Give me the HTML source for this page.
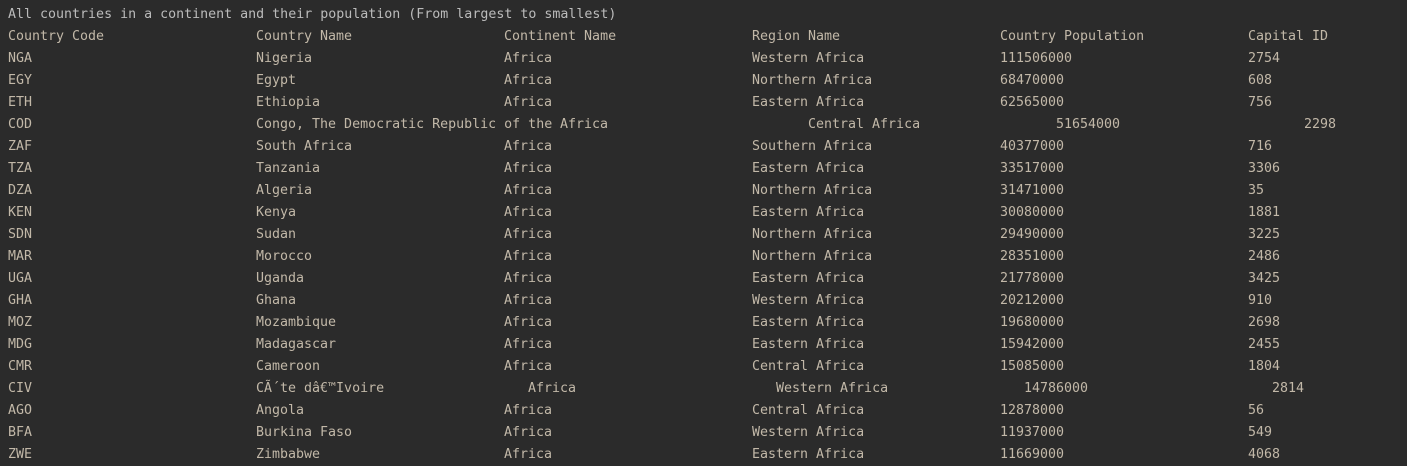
<!DOCTYPE html>
<html><head><meta charset="utf-8">
<style>
html,body{margin:0;padding:0;background:#2b2b2b;width:1407px;height:465px;overflow:hidden}
body{font-family:"DejaVu Sans Mono","Liberation Mono",monospace;font-size:13.3px;color:#c2b8a8}
.r{position:absolute;left:0;height:22px;line-height:22px;width:1407px;white-space:pre}
.r span{position:absolute;top:0}
.t{color:#bbbbbb}
.a{left:8px}.b{left:256px}.c{left:504px}.d{left:752px}.e{left:1000px}.f{left:1248px}
.s7 .c{left:560px}.s7 .d{left:808px}.s7 .e{left:1056px}.s7 .f{left:1304px}
.s3 .c{left:528px}.s3 .d{left:776px}.s3 .e{left:1024px}.s3 .f{left:1272px}
</style></head><body>
<div class="r t" style="top:4px"><span class="a">All countries in a continent and their population (From largest to smallest)</span></div>
<div class="r" style="top:26px"><span class="a">Country Code</span><span class="b">Country Name</span><span class="c">Continent Name</span><span class="d">Region Name</span><span class="e">Country Population</span><span class="f">Capital ID</span></div>
<div class="r" style="top:48px"><span class="a">NGA</span><span class="b">Nigeria</span><span class="c">Africa</span><span class="d">Western Africa</span><span class="e">111506000</span><span class="f">2754</span></div>
<div class="r" style="top:70px"><span class="a">EGY</span><span class="b">Egypt</span><span class="c">Africa</span><span class="d">Northern Africa</span><span class="e">68470000</span><span class="f">608</span></div>
<div class="r" style="top:92px"><span class="a">ETH</span><span class="b">Ethiopia</span><span class="c">Africa</span><span class="d">Eastern Africa</span><span class="e">62565000</span><span class="f">756</span></div>
<div class="r s7" style="top:114px"><span class="a">COD</span><span class="b">Congo, The Democratic Republic of the</span><span class="c">Africa</span><span class="d">Central Africa</span><span class="e">51654000</span><span class="f">2298</span></div>
<div class="r" style="top:136px"><span class="a">ZAF</span><span class="b">South Africa</span><span class="c">Africa</span><span class="d">Southern Africa</span><span class="e">40377000</span><span class="f">716</span></div>
<div class="r" style="top:158px"><span class="a">TZA</span><span class="b">Tanzania</span><span class="c">Africa</span><span class="d">Eastern Africa</span><span class="e">33517000</span><span class="f">3306</span></div>
<div class="r" style="top:180px"><span class="a">DZA</span><span class="b">Algeria</span><span class="c">Africa</span><span class="d">Northern Africa</span><span class="e">31471000</span><span class="f">35</span></div>
<div class="r" style="top:202px"><span class="a">KEN</span><span class="b">Kenya</span><span class="c">Africa</span><span class="d">Eastern Africa</span><span class="e">30080000</span><span class="f">1881</span></div>
<div class="r" style="top:224px"><span class="a">SDN</span><span class="b">Sudan</span><span class="c">Africa</span><span class="d">Northern Africa</span><span class="e">29490000</span><span class="f">3225</span></div>
<div class="r" style="top:246px"><span class="a">MAR</span><span class="b">Morocco</span><span class="c">Africa</span><span class="d">Northern Africa</span><span class="e">28351000</span><span class="f">2486</span></div>
<div class="r" style="top:268px"><span class="a">UGA</span><span class="b">Uganda</span><span class="c">Africa</span><span class="d">Eastern Africa</span><span class="e">21778000</span><span class="f">3425</span></div>
<div class="r" style="top:290px"><span class="a">GHA</span><span class="b">Ghana</span><span class="c">Africa</span><span class="d">Western Africa</span><span class="e">20212000</span><span class="f">910</span></div>
<div class="r" style="top:312px"><span class="a">MOZ</span><span class="b">Mozambique</span><span class="c">Africa</span><span class="d">Eastern Africa</span><span class="e">19680000</span><span class="f">2698</span></div>
<div class="r" style="top:334px"><span class="a">MDG</span><span class="b">Madagascar</span><span class="c">Africa</span><span class="d">Eastern Africa</span><span class="e">15942000</span><span class="f">2455</span></div>
<div class="r" style="top:356px"><span class="a">CMR</span><span class="b">Cameroon</span><span class="c">Africa</span><span class="d">Central Africa</span><span class="e">15085000</span><span class="f">1804</span></div>
<div class="r s3" style="top:378px"><span class="a">CIV</span><span class="b">CÃ´te dâ€™Ivoire</span><span class="c">Africa</span><span class="d">Western Africa</span><span class="e">14786000</span><span class="f">2814</span></div>
<div class="r" style="top:400px"><span class="a">AGO</span><span class="b">Angola</span><span class="c">Africa</span><span class="d">Central Africa</span><span class="e">12878000</span><span class="f">56</span></div>
<div class="r" style="top:422px"><span class="a">BFA</span><span class="b">Burkina Faso</span><span class="c">Africa</span><span class="d">Western Africa</span><span class="e">11937000</span><span class="f">549</span></div>
<div class="r" style="top:444px"><span class="a">ZWE</span><span class="b">Zimbabwe</span><span class="c">Africa</span><span class="d">Eastern Africa</span><span class="e">11669000</span><span class="f">4068</span></div>
</body></html>
